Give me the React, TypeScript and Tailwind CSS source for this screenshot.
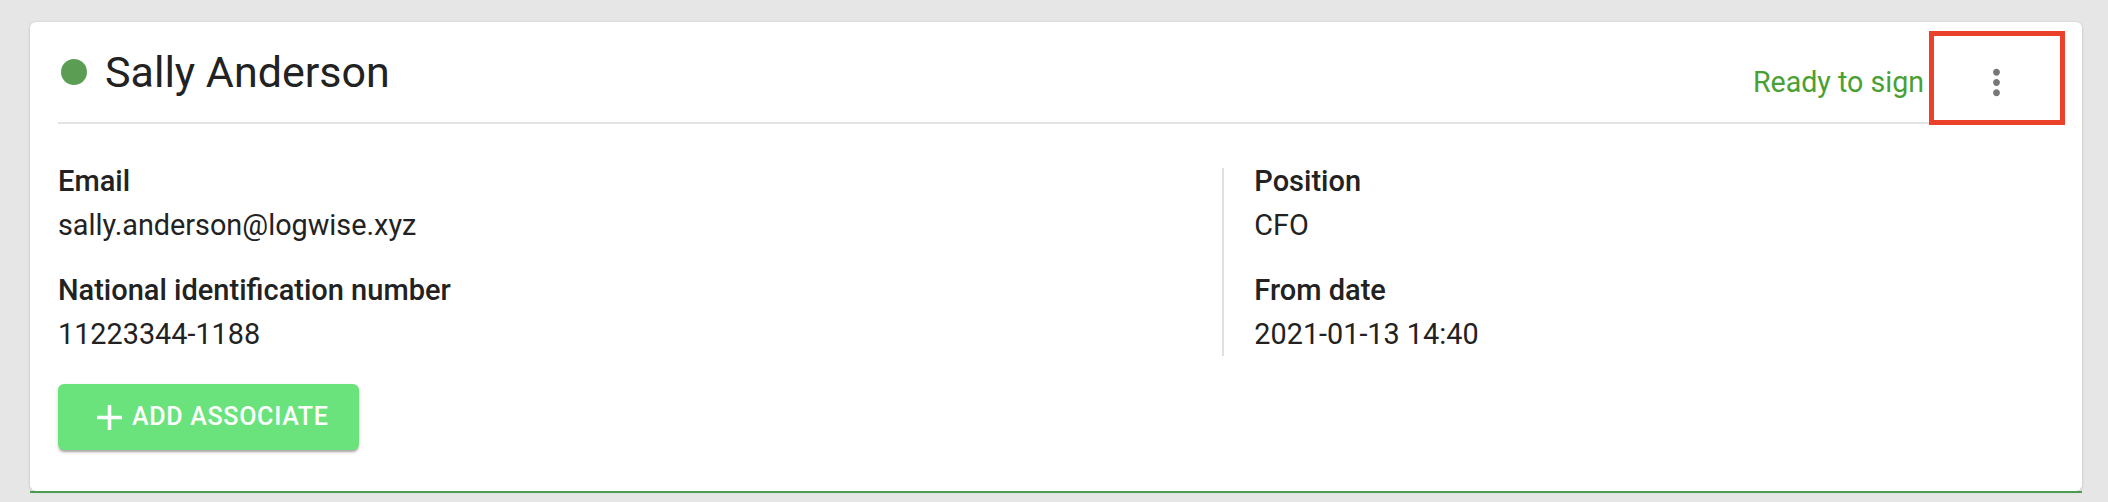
function MoreVertIcon() {
  return (
    <svg viewBox="0 0 24 24" className="w-[41px] h-[41px]" fill="#777777">
      <path d="M12 8c1.1 0 2-.9 2-2s-.9-2-2-2-2 .9-2 2 .9 2 2 2zm0 2c-1.1 0-2 .9-2 2s.9 2 2 2 2-.9 2-2-.9-2-2-2zm0 6c-1.1 0-2 .9-2 2s.9 2 2 2 2-.9 2-2-.9-2-2-2z" />
    </svg>
  );
}

function PlusIcon() {
  return (
    <svg viewBox="5 5 14 14" className="w-[25px] h-[25px]" fill="#ffffff">
      <path d="M19 13h-6v6h-2v-6H5v-2h6V5h2v6h6v2z" />
    </svg>
  );
}

function Field({ label, value }: { label: string; value: string }) {
  return (
    <div>
      <div className="text-[29px] leading-[44px] font-medium text-[#222]">{label}</div>
      <div className="text-[28.8px] leading-[44px] text-[#222]">{value}</div>
    </div>
  );
}

export default function App() {
  return (
    <div className="h-[502px] w-full overflow-hidden bg-[#e6e6e6] pt-[22px] pl-[30px] pr-[26px] font-['Roboto','Liberation_Sans',sans-serif]">
      <div className="relative">
        {/* Card */}
        <div className="bg-white rounded-[6px] shadow-[0_1px_3px_rgba(0,0,0,0.14),0_0_2px_rgba(0,0,0,0.08)] px-[28px] pt-[25px] pb-[41px]">
          {/* Header */}
          <div className="flex items-start justify-between h-[75px]">
            <div className="flex items-center h-[50px]">
              <span className="w-[26px] h-[26px] rounded-full bg-[#5b9e53] ml-[3px]" />
              <h2 className="ml-[18px] text-[43px] leading-[50px] text-[#222]">Sally Anderson</h2>
            </div>
            <div className="flex items-center h-[65px] mt-[3px] mr-[15px]">
              <span className="text-[28.6px] text-[#49a033]">Ready to sign</span>
              <button className="ml-[29px] w-[86px] h-[65px] flex items-center justify-center">
                <MoreVertIcon />
              </button>
            </div>
          </div>
          <div className="h-[2px] bg-[#e4e4e4]" />

          {/* Details */}
          <div className="flex mt-[35px]">
            <div className="w-7/12 flex flex-col gap-[21px]">
              <Field label="Email" value="sally.anderson@logwise.xyz" />
              <Field label="National identification number" value="11223344-1188" />
            </div>
            <div className="w-[2px] mt-[9px] bg-[#e0e0e0]" />
            <div className="flex-1 pl-[30px] flex flex-col gap-[21px]">
              <Field label="Position" value="CFO" />
              <Field label="From date" value="2021-01-13 14:40" />
            </div>
          </div>

          <button className="mt-[28px] h-[66px] pl-[39px] pr-[30px] flex items-center gap-[10px] rounded-[6px] bg-[#6be37c] text-white shadow-[0_3px_2px_-1px_rgba(0,0,0,0.25),0_2px_4px_rgba(0,0,0,0.14)]">
            <PlusIcon />
            <span className="text-[25px] font-medium tracking-[0.7px] uppercase">Add associate</span>
          </button>
        </div>
        <div className="h-[2px] bg-[#4c9b53]" />

        {/* Annotation highlight */}
        <div className="absolute left-[1899px] top-[9px] w-[136px] h-[94px] border-[5px] border-[#e9412a]" />
      </div>
    </div>
  );
}
